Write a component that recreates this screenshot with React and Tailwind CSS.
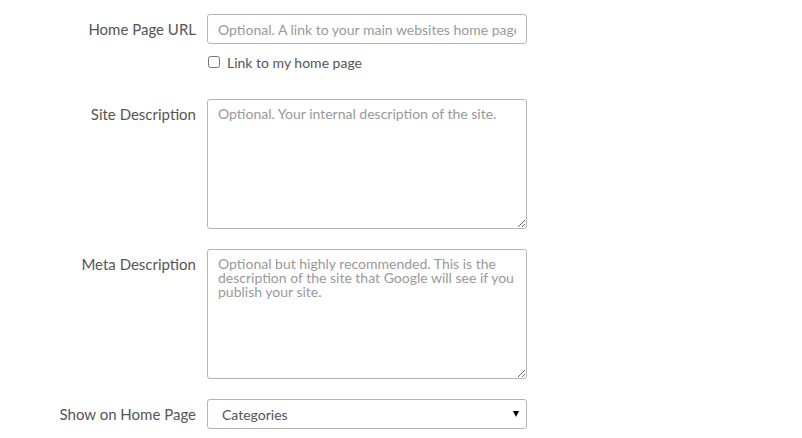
export default function App() {
  return (
    <div className="w-[802px] h-[438px] bg-white overflow-hidden text-[#555] text-[15px]" style={{ fontFamily: 'Lato, "Open Sans", sans-serif' }}>
      <div className="pt-[14px] flex flex-col">
        {/* Home Page URL */}
        <div className="flex items-center">
          <label className="w-[197px] text-right pr-[1px]">Home Page URL</label>
          <input
            type="text"
            placeholder="Optional. A link to your main websites home page"
            className="ml-[10px] w-[320px] h-[30px] border border-[#b5b5b5] rounded-[3px] px-[10px] text-[14px] placeholder:text-[#999] outline-none"
          />
        </div>
        <div className="flex items-center mt-[11px] ml-[208px] h-[14px]">
          <input type="checkbox" className="w-[12px] h-[12px] m-0" />
          <span className="ml-[7px] text-[14px]">Link to my home page</span>
        </div>

        {/* Site Description */}
        <div className="flex mt-[30px]">
          <label className="w-[197px] text-right pr-[1px] pt-[4px]">Site Description</label>
          <textarea
            placeholder="Optional. Your internal description of the site."
            className="ml-[10px] w-[320px] h-[130px] border border-[#b5b5b5] rounded-[3px] px-[10px] pt-[7px] text-[14px] leading-[14px] placeholder:text-[#999] outline-none resize-y"
          />
        </div>

        {/* Meta Description */}
        <div className="flex mt-[20px]">
          <label className="w-[197px] text-right pr-[1px] pt-[4px]">Meta Description</label>
          <textarea
            placeholder="Optional but highly recommended. This is the description of the site that Google will see if you publish your site."
            className="ml-[10px] w-[320px] h-[130px] border border-[#b5b5b5] rounded-[3px] px-[10px] pt-[7px] text-[14px] leading-[14px] placeholder:text-[#999] outline-none resize-y"
          />
        </div>

        {/* Show on Home Page */}
        <div className="flex items-center mt-[20px]">
          <label className="w-[197px] text-right pr-[1px]">Show on Home Page</label>
          <div className="relative ml-[10px] w-[320px] h-[30px]">
            <select className="appearance-none w-full h-full border border-[#b5b5b5] rounded-[3px] pl-[14px] pr-[24px] text-[14px] text-[#555] bg-white outline-none">
              <option>Categories</option>
            </select>
            <span className="absolute right-[8px] top-[12px] w-0 h-0 border-l-[3px] border-r-[3px] border-t-[6px] border-l-transparent border-r-transparent border-t-black pointer-events-none" />
          </div>
        </div>
      </div>
    </div>
  )
}
